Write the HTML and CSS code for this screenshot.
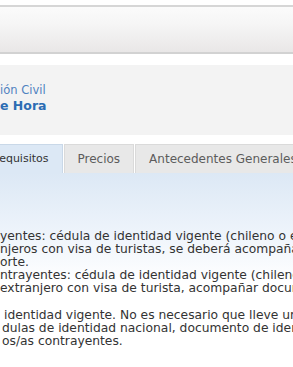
FILE: index.html
```html
<!DOCTYPE html>
<html lang="es">
<head>
<meta charset="utf-8">
<title>Requisitos</title>
<link rel="stylesheet" href="styles.css">
</head>
<body>
<div class="topbar"></div>
<section class="header">
  <div class="crumb">ión Civil</div>
  <h1 class="title">e Hora</h1>
</section>
<nav class="tabs">
  <div class="tab active">Requisitos</div>
  <div class="tab">Precios</div>
  <div class="tab">Antecedentes Generales</div>
</nav>
<section class="panel">
  <div class="content">
    <p class="para">
      <span class="line">yentes: cédula de identidad vigente (chileno o extranjero).</span>
      <span class="line">njeros con visa de turistas, se deberá acompañar</span>
      <span class="line">orte.</span>
      <span class="line">ntrayentes: cédula de identidad vigente (chileno o extranjero).</span>
      <span class="line">extranjero con visa de turista, acompañar documento</span>
    </p>
    <p class="para">
      <span class="line in4">identidad vigente. No es necesario que lleve un pasaporte</span>
      <span class="line in2">dulas de identidad nacional, documento de identidad</span>
      <span class="line in2">os/as contrayentes.</span>
    </p>
  </div>
</section>
</body>
</html>
```
FILE: styles.css
```css
html, body {
  margin: 0;
  padding: 0;
  background: #ffffff;
  overflow: hidden;
  width: 293px;
  height: 367px;
  font-family: "DejaVu Sans", Verdana, sans-serif;
}

.topbar {
  margin-top: 5px;
  height: 45px;
  border-top: 2px solid #d6d6d6;
  border-bottom: 2px solid #d2d2d2;
  background: linear-gradient(#fbfbfb, #f6f6f6 35%, #e9e7e7);
}

.header {
  margin-top: 11px;
  height: 70px;
  box-sizing: border-box;
  padding-top: 18px;
  background: #f3f3f3;
  white-space: nowrap;
}

.crumb {
  font-size: 11.5px;
  line-height: 14px;
  color: #4f82c0;
}

.title {
  margin: 1px 0 0 0;
  font-size: 12.5px;
  line-height: 16px;
  font-weight: bold;
  color: #2c6cb3;
}

.tabs {
  display: flex;
  gap: 1px;
  margin-top: 9px;
  margin-left: -22px;
  height: 29px;
  white-space: nowrap;
}

.tab {
  flex: none;
  padding: 0 13px;
  border: 1px solid #dadada;
  border-bottom: none;
  background: #e8e8e8;
  color: #5c5c5c;
  font-size: 12px;
  line-height: 28px;
}

.tab.active {
  background: #dce8f5;
  border-color: #c9d8e8;
  color: #333333;
  font-size: 11px;
}

.panel {
  height: 200px;
  background: linear-gradient(#dce8f5, #eef4fb 60px, #ffffff 110px);
}

.content {
  padding-top: 57px;
  font-size: 12.3px;
  line-height: 13px;
  color: #333333;
}

.para {
  margin: 0 0 14px 0;
}

.line {
  display: block;
  white-space: nowrap;
}

.in4 {
  padding-left: 4px;
}

.in2 {
  padding-left: 2px;
}
```
